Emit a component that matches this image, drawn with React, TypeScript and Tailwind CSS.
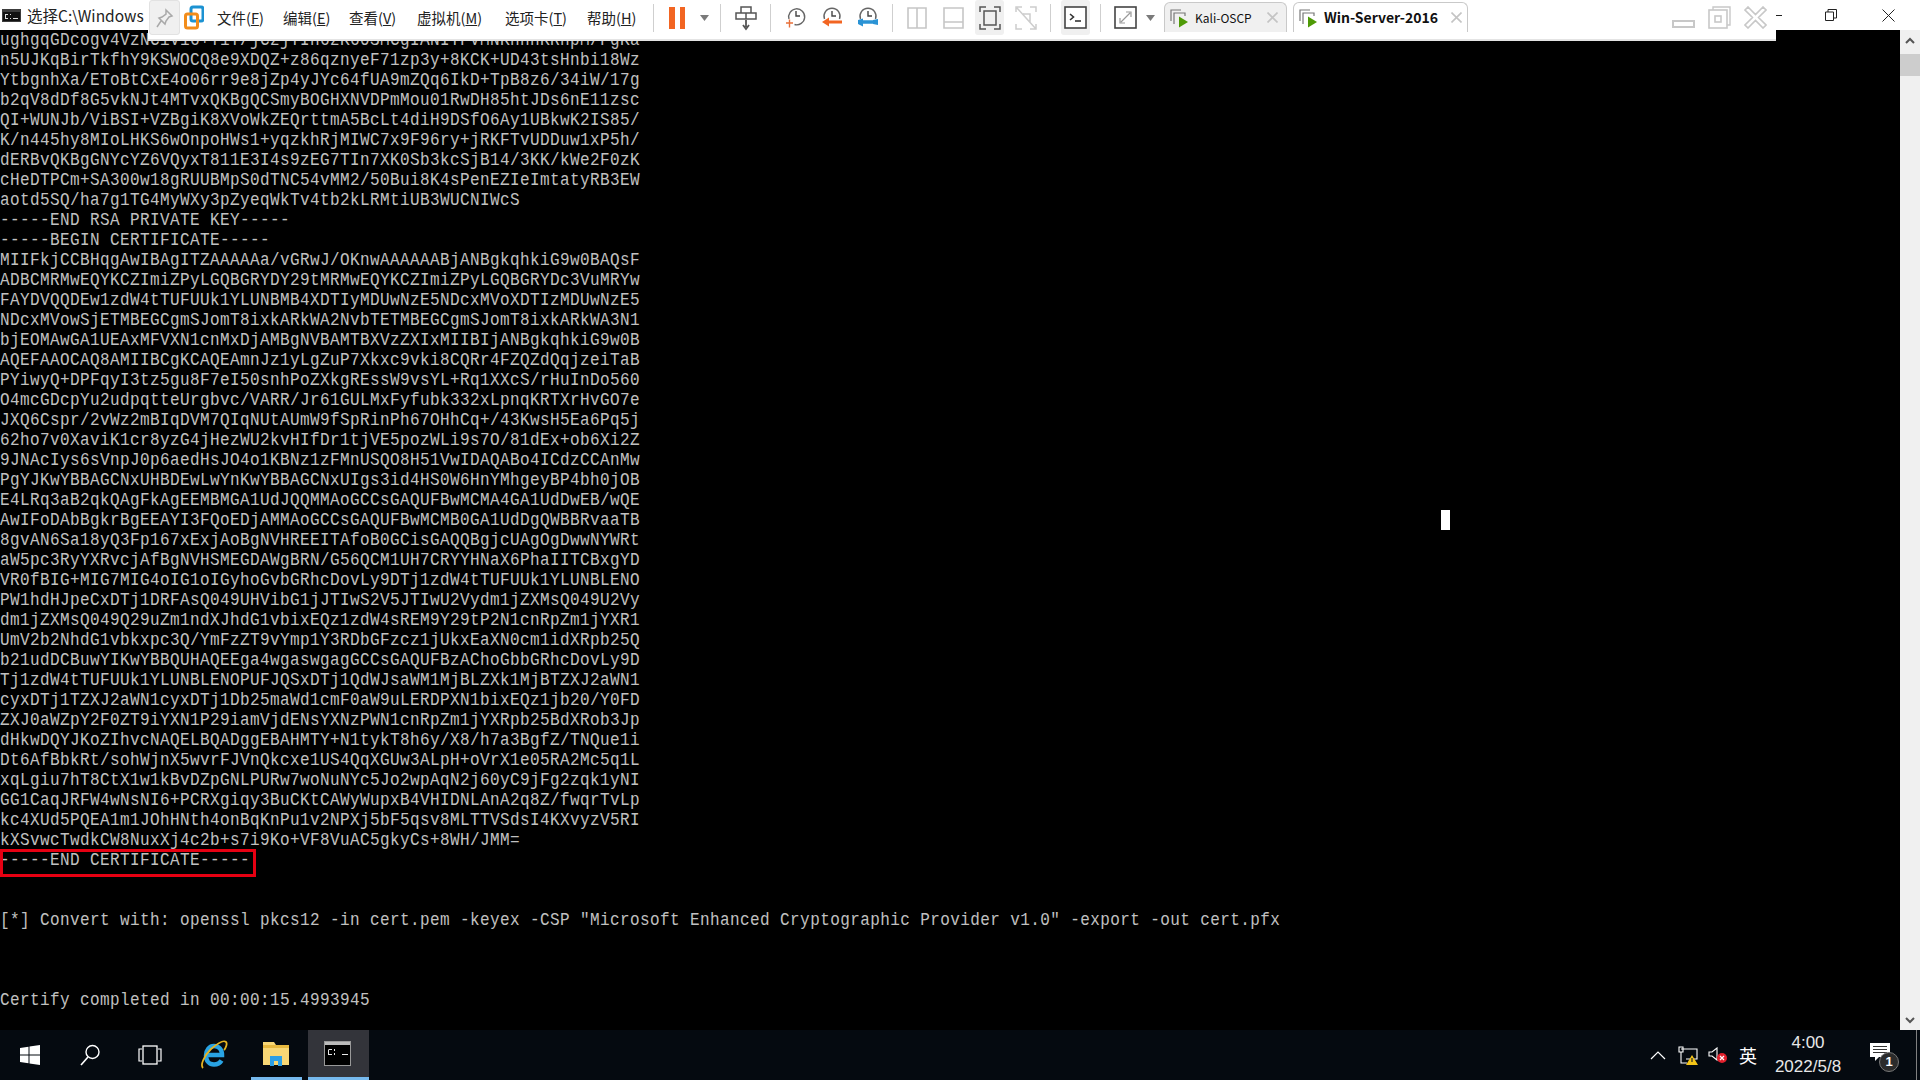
import React from "react";

const LINES = [
  "ughgqGDcogv4VzNCiV16+Y1T/jCzjYIh6zK60SMCgIANITFVMNKhhhKRhpM/FgKa",
  "n5UJKqBirTkfhY9KSWOCQ8e9XDQZ+z86qznyeF71zp3y+8KCK+UD43tsHnbi18Wz",
  "YtbgnhXa/EToBtCxE4o06rr9e8jZp4yJYc64fUA9mZQq6IkD+TpB8z6/34iW/17g",
  "b2qV8dDf8G5vkNJt4MTvxQKBgQCSmyBOGHXNVDPmMou01RwDH85htJDs6nE11zsc",
  "QI+WUNJb/ViBSI+VZBgiK8XVoWkZEQrttmA5BcLt4diH9DSfO6Ay1UBkwK2IS85/",
  "K/n445hy8MIoLHKS6wOnpoHWs1+yqzkhRjMIWC7x9F96ry+jRKFTvUDDuw1xP5h/",
  "dERBvQKBgGNYcYZ6VQyxT811E3I4s9zEG7TIn7XK0Sb3kcSjB14/3KK/kWe2F0zK",
  "cHeDTPCm+SA300w18gRUUBMpS0dTNC54vMM2/50Bui8K4sPenEZIeImtatyRB3EW",
  "aotd5SQ/ha7g1TG4MyWXy3pZyeqWkTv4tb2kLRMtiUB3WUCNIWcS",
  "-----END RSA PRIVATE KEY-----",
  "-----BEGIN CERTIFICATE-----",
  "MIIFkjCCBHqgAwIBAgITZAAAAAa/vGRwJ/OKnwAAAAAABjANBgkqhkiG9w0BAQsF",
  "ADBCMRMwEQYKCZImiZPyLGQBGRYDY29tMRMwEQYKCZImiZPyLGQBGRYDc3VuMRYw",
  "FAYDVQQDEw1zdW4tTUFUUk1YLUNBMB4XDTIyMDUwNzE5NDcxMVoXDTIzMDUwNzE5",
  "NDcxMVowSjETMBEGCgmSJomT8ixkARkWA2NvbTETMBEGCgmSJomT8ixkARkWA3N1",
  "bjEOMAwGA1UEAxMFVXN1cnMxDjAMBgNVBAMTBXVzZXIxMIIBIjANBgkqhkiG9w0B",
  "AQEFAAOCAQ8AMIIBCgKCAQEAmnJz1yLgZuP7Xkxc9vki8CQRr4FZQZdQqjzeiTaB",
  "PYiwyQ+DPFqyI3tz5gu8F7eI50snhPoZXkgREssW9vsYL+Rq1XXcS/rHuInDo560",
  "O4mcGDcpYu2udpqtteUrgbvc/VARR/Jr61GULMxFyfubk332xLpnqKRTXrHvGO7e",
  "JXQ6Cspr/2vWz2mBIqDVM7QIqNUtAUmW9fSpRinPh67OHhCq+/43KwsH5Ea6Pq5j",
  "62ho7v0XaviK1cr8yzG4jHezWU2kvHIfDr1tjVE5pozWLi9s7O/81dEx+ob6Xi2Z",
  "9JNAcIys6sVnpJ0p6aedHsJO4o1KBNz1zFMnUSQO8H51VwIDAQABo4ICdzCCAnMw",
  "PgYJKwYBBAGCNxUHBDEwLwYnKwYBBAGCNxUIgs3id4HS0W6HnYMhgeyBP4bh0jOB",
  "E4LRq3aB2qkQAgFkAgEEMBMGA1UdJQQMMAoGCCsGAQUFBwMCMA4GA1UdDwEB/wQE",
  "AwIFoDAbBgkrBgEEAYI3FQoEDjAMMAoGCCsGAQUFBwMCMB0GA1UdDgQWBBRvaaTB",
  "8gvAN6Sa18yQ3Fp167xExjAoBgNVHREEITAfoB0GCisGAQQBgjcUAgOgDwwNYWRt",
  "aW5pc3RyYXRvcjAfBgNVHSMEGDAWgBRN/G56QCM1UH7CRYYHNaX6PhaIITCBxgYD",
  "VR0fBIG+MIG7MIG4oIG1oIGyhoGvbGRhcDovLy9DTj1zdW4tTUFUUk1YLUNBLENO",
  "PW1hdHJpeCxDTj1DRFAsQ049UHVibG1jJTIwS2V5JTIwU2Vydm1jZXMsQ049U2Vy",
  "dm1jZXMsQ049Q29uZm1ndXJhdG1vbixEQz1zdW4sREM9Y29tP2N1cnRpZm1jYXR1",
  "UmV2b2NhdG1vbkxpc3Q/YmFzZT9vYmp1Y3RDbGFzcz1jUkxEaXN0cm1idXRpb25Q",
  "b21udDCBuwYIKwYBBQUHAQEEga4wgaswgagGCCsGAQUFBzAChoGbbGRhcDovLy9D",
  "Tj1zdW4tTUFUUk1YLUNBLENOPUFJQSxDTj1QdWJsaWM1MjBLZXk1MjBTZXJ2aWN1",
  "cyxDTj1TZXJ2aWN1cyxDTj1Db25maWd1cmF0aW9uLERDPXN1bixEQz1jb20/Y0FD",
  "ZXJ0aWZpY2F0ZT9iYXN1P29iamVjdENsYXNzPWN1cnRpZm1jYXRpb25BdXRob3Jp",
  "dHkwDQYJKoZIhvcNAQELBQADggEBAHMTY+N1tykT8h6y/X8/h7a3BgfZ/TNQue1i",
  "Dt6AfBbkRt/sohWjnX5wvrFJVnQkcxe1US4QqXGUw3ALpH+oVrX1e05RA2Mc5q1L",
  "xqLgiu7hT8CtX1w1kBvDZpGNLPURw7woNuNYc5Jo2wpAqN2j60yC9jFg2zqk1yNI",
  "GG1CaqJRFW4wNsNI6+PCRXgiqy3BuCKtCAWyWupxB4VHIDNLAnA2q8Z/fwqrTvLp",
  "kc4XUd5PQEA1m1JOhHNth4onBqKnPu1v2NPXj5bF5qsv8MLTTVSdsI4KXvyzV5RI",
  "kXSvwcTwdkCW8NuxXj4c2b+s7i9Ko+VF8VuAC5gkyCs+8WH/JMM=",
  "-----END CERTIFICATE-----",
  "",
  "",
  "[*] Convert with: openssl pkcs12 -in cert.pem -keyex -CSP \"Microsoft Enhanced Cryptographic Provider v1.0\" -export -out cert.pfx",
  "",
  "",
  "",
  "Certify completed in 00:00:15.4993945",
];

const Sep = ({ className }: { className: string }) => (
  <div className={`w-px h-[28px] bg-[#cfcfcf] shrink-0 ${className}`} />
);

const Caret = ({ className }: { className: string }) => (
  <svg width="9" height="6" viewBox="0 0 9 6" className={`shrink-0 ${className}`}>
    <path d="M0 0h9L4.5 6z" fill="#7a7a7a" />
  </svg>
);

const Menu = ({ label, k, width }: { label: string; k: string; width: string }) => (
  <div className={`shrink-0 text-[14.5px] leading-[20px] text-[#222] whitespace-nowrap ${width}`}>
    {label}(<span className="underline">{k}</span>)
  </div>
);

const Clock = ({ className, badge }: { className: string; badge: "plus" | "left" | "wrench" }) => (
  <svg width="21" height="21" viewBox="0 0 21 21" className={`shrink-0 ${className}`} fill="none">
    {badge === "plus" && <path d="M4 12A8 8 0 1 1 9.500 17.500" stroke="#666" strokeWidth="1.4" />}
    {badge !== "plus" && <path d="M3.500 12A8 8 0 1 1 18.500 12" stroke="#666" strokeWidth="1.4" />}
    <path d="M11 4v5h4" stroke="#444" strokeWidth="1.4" />
    {badge === "plus" && <path d="M1 16h7M4.500 12.500v8" stroke="#e8703a" strokeWidth="1.4" />}
    {badge === "left" && (
      <>
        <path d="M21 15H6" stroke="#f26522" strokeWidth="3" />
        <path d="M8 10.500L1 15l7 4.500z" fill="#f26522" />
      </>
    )}
    {badge === "wrench" && (
      <>
        <path d="M5 15h12" stroke="#2a93d5" strokeWidth="3.500" />
        <path d="M6 11.500L1 13v4l5 2.500zM21 12l-5 1v4l5 1z" fill="#2a93d5" />
      </>
    )}
  </svg>
);

const TabIcon = () => (
  <svg width="20" height="20" viewBox="0 0 20 20" className="shrink-0" fill="none">
    <path d="M1 13V2h10" stroke="#777" strokeWidth="1.2" />
    <path d="M4 16V5h11v3" stroke="#777" strokeWidth="1.2" />
    <path d="M9 8.500l9 5.500-9 5.500z" fill="#4e9a06" />
  </svg>
);

const TabX = ({ className }: { className: string }) => (
  <svg width="11" height="11" viewBox="0 0 11 11" className={`shrink-0 ${className}`}>
    <path d="M.5.5l10 10M10.500.5l-10 10" stroke="#c4c4c4" strokeWidth="1.6" />
  </svg>
);

function Toolbar() {
  return (
    <div className="absolute left-[148px] top-0 w-[1628px] h-[41px] bg-white border-b-2 border-[#e4e4e4] flex items-center font-['Noto_Sans_CJK_SC',sans-serif] pb-[4px]">
      <div className="ml-[1px] w-[31px] h-[35px] bg-[#f0f0f0] rounded-[3px] border border-[#e2e2e2] shrink-0 flex items-center justify-center">
        <svg width="18" height="20" viewBox="0 0 18 20" fill="none">
          <path d="M10 2l6 6-3 1-3 4-1 3-6-6 3-1 4-3z M5 13l-4 6" stroke="#a9a9a9" strokeWidth="1.5" />
        </svg>
      </div>
      <svg width="20" height="26" viewBox="0 0 20 26" className="ml-[4px] shrink-0" fill="none">
        <rect x="7" y="2" width="12" height="14" rx="2" stroke="#1c92d2" strokeWidth="3" />
        <rect x="1.500" y="9" width="12" height="14" rx="2" stroke="#f28c1a" strokeWidth="3" />
      </svg>
      <div className="ml-[13px] flex">
        <Menu label="文件" k="F" width="w-[66px]" />
        <Menu label="编辑" k="E" width="w-[66px]" />
        <Menu label="查看" k="V" width="w-[68px]" />
        <Menu label="虚拟机" k="M" width="w-[88px]" />
        <Menu label="选项卡" k="T" width="w-[82px]" />
        <Menu label="帮助" k="H" width="w-[66px]" />
      </div>
      <Sep className="" />
      <div className="ml-[15px] flex gap-[5px] shrink-0">
        <div className="w-[6px] h-[22px] bg-[#f26522]" />
        <div className="w-[5px] h-[22px] bg-[#f26522]" />
      </div>
      <Caret className="ml-[15px]" />
      <Sep className="ml-[11px]" />
      <svg width="22" height="26" viewBox="0 0 22 26" className="ml-[14px] shrink-0" fill="none">
        <path d="M6 2h10v6H6zM1 8h10v6H1zM11 8h10v6H11z" stroke="#555" strokeWidth="1.5" />
        <path d="M11 15v7M8 20l3 4 3-4" stroke="#555" strokeWidth="1.8" />
      </svg>
      <Sep className="ml-[13px]" />
      <Clock className="ml-[14px]" badge="plus" />
      <Clock className="ml-[15px]" badge="left" />
      <Clock className="ml-[15px]" badge="wrench" />
      <Sep className="ml-[14px]" />
      <svg width="20" height="22" viewBox="0 0 20 22" className="ml-[14px] shrink-0" fill="none">
        <path d="M1 1h18v20H1zM10 1v20" stroke="#c6c6c6" strokeWidth="1.6" />
      </svg>
      <svg width="21" height="22" viewBox="0 0 21 22" className="ml-[16px] shrink-0" fill="none">
        <path d="M1 1h19v20H1zM1 15h19" stroke="#c6c6c6" strokeWidth="1.6" />
      </svg>
      <div className="ml-[11px] w-[29px] h-[35px] bg-[#f0f0f0] rounded-[3px] shrink-0 flex items-center justify-center">
        <svg width="22" height="24" viewBox="0 0 22 24" fill="none">
          <path d="M1 6V1h6M15 1h6v5M21 18v5h-6M7 23H1v-5" stroke="#555" strokeWidth="1.5" />
          <rect x="5" y="5" width="12" height="14" stroke="#555" strokeWidth="1.5" />
        </svg>
      </div>
      <svg width="22" height="24" viewBox="0 0 22 24" className="ml-[11px] shrink-0" fill="none">
        <path d="M1 6V1h6M15 1h6v5M21 18v5h-6M7 23H1v-5M2 2l19 21M8 8h7v8" stroke="#cdcdcd" strokeWidth="1.5" />
      </svg>
      <Sep className="ml-[13px]" />
      <div className="ml-[10px] w-[29px] h-[35px] bg-[#f0f0f0] rounded-[3px] shrink-0 flex items-center justify-center">
        <svg width="23" height="23" viewBox="0 0 23 23" fill="none">
          <rect x="1" y="1" width="21" height="21" stroke="#444" strokeWidth="1.6" fill="#fff" />
          <path d="M6 8l3.500 3L6 14" stroke="#333" strokeWidth="1.6" />
          <path d="M11 15h6" stroke="#333" strokeWidth="1.6" />
        </svg>
      </div>
      <Sep className="ml-[10px]" />
      <svg width="23" height="23" viewBox="0 0 23 23" className="ml-[13px] shrink-0" fill="none">
        <rect x="1" y="1" width="21" height="21" stroke="#444" strokeWidth="1.6" />
        <path d="M7 16l9-9M12 6h5v5M6 12v5h5" stroke="#999" strokeWidth="1.2" />
      </svg>
      <Caret className="ml-[9px]" />
      <div className="ml-[9px] w-[123px] h-[30px] self-end mb-[3px] bg-[#f0f0f0] border border-b-0 border-[#c9c9c9] rounded-t-[6px] shrink-0 flex items-center pl-[5px]">
        <TabIcon />
        <span className="ml-[5px] text-[12px] text-[#111]">Kali-OSCP</span>
        <TabX className="ml-[15px]" />
      </div>
      <div className="ml-[6px] w-[175px] h-[30px] self-end mb-[3px] bg-white border border-b-0 border-[#c9c9c9] rounded-t-[6px] shrink-0 flex items-center pl-[5px]">
        <TabIcon />
        <span className="ml-[5px] text-[14px] font-bold text-[#111] whitespace-nowrap">Win-Server-2016</span>
        <TabX className="ml-[13px]" />
      </div>
      <div className="ml-[204px] w-[23px] h-[8px] border-2 border-[#c8c8c8] shrink-0 self-end mb-[7px]" />
      <svg width="23" height="23" viewBox="0 0 23 23" className="ml-[13px] shrink-0 self-end mb-[6px]" fill="none">
        <path d="M5 4V1h17v18h-3" stroke="#c8c8c8" strokeWidth="1.4" />
        <rect x="1" y="4" width="18" height="18" stroke="#c8c8c8" strokeWidth="1.6" />
        <rect x="7" y="10" width="6" height="6" stroke="#c8c8c8" strokeWidth="1.6" />
      </svg>
      <svg width="23" height="23" viewBox="0 0 23 23" className="ml-[13px] shrink-0 self-end mb-[6px]" fill="none">
        <path d="M1 4l3-3 7.500 7.500L19 1l3 3-7.500 7.500L22 19l-3 3-7.500-7.500L4 22l-3-3 7.500-7.500z" stroke="#c8c8c8" strokeWidth="1.6" />
      </svg>
    </div>
  );
}

function Taskbar() {
  return (
    <div className="h-[50px] bg-[#050a10] flex items-center shrink-0 font-['Noto_Sans_CJK_SC',sans-serif]">
      <svg width="20" height="20" viewBox="0 0 20 20" className="ml-[20px] shrink-0" fill="#fff">
        <path d="M0 3l8.500-1.300v7.800H0zM9.500 1.500L20 0v9.500H9.500zM0 10.500h8.500v7.800L0 17zM9.500 10.500H20V20L9.500 18.500z" />
      </svg>
      <svg width="20" height="22" viewBox="0 0 20 22" className="ml-[40px] shrink-0" fill="none">
        <circle cx="12.500" cy="8" r="6.500" stroke="#fff" strokeWidth="1.4" />
        <path d="M8 13l-7 8" stroke="#fff" strokeWidth="1.6" />
      </svg>
      <svg width="24" height="20" viewBox="0 0 24 20" className="ml-[38px] shrink-0" fill="none">
        <rect x="5" y="1" width="14" height="18" stroke="#fff" strokeWidth="1.3" />
        <path d="M4 4H1v12h3M20 4h3v12h-3" stroke="#fff" strokeWidth="1.2" />
      </svg>
      <svg width="28" height="30" viewBox="0 0 28 30" className="ml-[38px] shrink-0" fill="none">
        <path d="M6 15h16c0-6-3.500-9-8-9s-8 4-8 9.500 3.500 9 8 9c3.500 0 6-1.500 7.500-4" stroke="#29a3e3" strokeWidth="4.500" />
        <path d="M3 28c-3-3 1-12 8-19 7-6 13-9 15-7 1.500 1.500 0 6-2 8" stroke="#e6b422" strokeWidth="1.800" />
      </svg>
      <div className="ml-[23px] w-[51px] h-[50px] shrink-0 flex items-center justify-center pr-[2px] border-b-[3px] border-[#76b9ed]">
        <svg width="26" height="26" viewBox="0 0 26 26">
          <path d="M0 1h11l2 3h13v20H0z" fill="#f8d775" />
          <path d="M0 4h26v3H0z" fill="#e8b93f" />
          <path d="M7 25V15h12v10h-4v-5h-4v5z" fill="#2c9fe6" />
        </svg>
      </div>
      <div className="ml-[6px] w-[61px] h-[50px] shrink-0 bg-[#33343a] flex items-center justify-center pr-[3px] border-b-[3px] border-[#76b9ed]">
        <svg width="27" height="25" viewBox="0 0 27 25">
          <rect x=".5" y=".5" width="26" height="24" fill="#000" stroke="#999" />
          <rect x="1" y="1" width="25" height="3" fill="#bbb" />
          <path d="M5 8h3v1H5v4h3v1H4V9zM10 8h1v2h-1zM10 12h1v2h-1zM13 8l3 6M18 13h6v1h-6z" fill="#e8e8e8" />
        </svg>
      </div>
      <svg width="16" height="9" viewBox="0 0 16 9" className="ml-[1281px] shrink-0" fill="none">
        <path d="M1 8l7-7 7 7" stroke="#fff" strokeWidth="1.2" />
      </svg>
      <svg width="21" height="19" viewBox="0 0 21 19" className="ml-[12px] shrink-0" fill="none">
        <path d="M3 3h16v10H8M5 1H1v5h4zM3 6v11h6" stroke="#fff" strokeWidth="1.1" />
        <path d="M14 9l6 10H8z" fill="#f5c518" />
        <path d="M14 12v4" stroke="#222" strokeWidth="1.2" />
      </svg>
      <svg width="20" height="16" viewBox="0 0 20 16" className="ml-[9px] shrink-0" fill="none">
        <path d="M1 5h3l5-4v12l-5-4H1z" stroke="#fff" strokeWidth="1.1" />
        <circle cx="14" cy="11" r="5" fill="#e2202c" />
        <path d="M12 9l4 4M16 9l-4 4" stroke="#fff" strokeWidth="1.2" />
      </svg>
      <span className="ml-[11px] w-[18px] text-[18px] leading-[20px] text-white shrink-0">英</span>
      <div className="ml-[17px] w-[68px] text-center text-[#e8e8e8] text-[17px] leading-[24px] shrink-0 font-['Liberation_Sans',sans-serif]">
        <div>4:00</div>
        <div className="whitespace-nowrap">2022/5/8</div>
      </div>
      <div className="ml-[28px] relative w-[20px] h-[18px] shrink-0 -mt-[6px]">
        <svg width="20" height="18" viewBox="0 0 20 18" fill="#fff">
          <path d="M0 0h20v14H9l-4 4v-4H0z" />
          <path d="M3 3.500h14M3 6.500h14M3 9.500h14" stroke="#333" strokeWidth="1" />
        </svg>
        <div className="absolute left-[9px] top-[9px] w-[20px] h-[20px] rounded-full bg-[#2b2b2b] border border-[#777] text-white text-[13px] leading-[18px] text-center font-bold font-['Liberation_Sans',sans-serif]">
          1
        </div>
      </div>
      <div className="ml-[26px] w-px h-[50px] bg-[#808080] shrink-0" />
    </div>
  );
}

export default function App() {
  return (
    <div className="relative w-[1920px] h-[1080px] overflow-hidden flex flex-col bg-black">
      <div className="h-[30px] bg-white flex items-center shrink-0 font-['Noto_Sans_CJK_SC',sans-serif]">
        <svg width="19" height="13" viewBox="0 0 19 13" className="ml-[2px] shrink-0">
          <rect width="19" height="13" fill="#3c3c3c" />
          <rect x="1" y="3" width="17" height="9" fill="#111" />
          <path d="M3 5h3v1H4v3h2v1H3zM8 5h1v1H8zM8 9h1v1H8zM11 9h5v1h-5z" fill="#ddd" />
        </svg>
        <span className="ml-[6px] text-[15.5px] leading-[20px] text-[#222] whitespace-nowrap">选择C:\Windows</span>
        <div className="ml-auto mr-[43px] w-[6px] h-px bg-[#222]" />
        <svg width="12" height="12" viewBox="0 0 12 12" className="mr-[45px]" fill="none">
          <path d="M.5 3h8v8.500h-8zM3 3V.5h8.500V9H9" stroke="#222" />
        </svg>
        <svg width="13" height="13" viewBox="0 0 13 13" className="mr-[25px]" fill="none">
          <path d="M.5.5l12 12M12.500.5l-12 12" stroke="#222" />
        </svg>
      </div>
      <div className="flex-1 flex min-h-0">
        <div className="relative flex-1 min-w-0 font-['Liberation_Mono',monospace] text-[16px] tracking-[0.4px] leading-[20px] text-[#c0c0c0] whitespace-pre">
          {LINES.map((line, i) => (
            <div key={i} className="h-[20px] scale-y-[1.2]">
              {line}
            </div>
          ))}
          <div className="absolute left-0 top-[819px] w-[256px] h-[28px] border-[3px] border-[#e60012]" />
          <div className="absolute left-[1441px] top-[480px] w-[9px] h-[20px] bg-white" />
        </div>
        <div className="w-[20px] bg-[#f0f0f0] flex flex-col items-center shrink-0">
          <div className="h-[20px] flex items-center justify-center shrink-0">
            <svg width="10" height="7" viewBox="0 0 10 7" fill="none">
              <path d="M1 6l4-4 4 4" stroke="#555" strokeWidth="2" />
            </svg>
          </div>
          <div className="mt-[4px] w-full h-[22px] bg-[#cdcdcd]" />
          <div className="mt-auto h-[20px] flex items-center justify-center shrink-0">
            <svg width="10" height="7" viewBox="0 0 10 7" fill="none">
              <path d="M1 1l4 4 4-4" stroke="#555" strokeWidth="2" />
            </svg>
          </div>
        </div>
      </div>
      <Taskbar />
      <Toolbar />
    </div>
  );
}
